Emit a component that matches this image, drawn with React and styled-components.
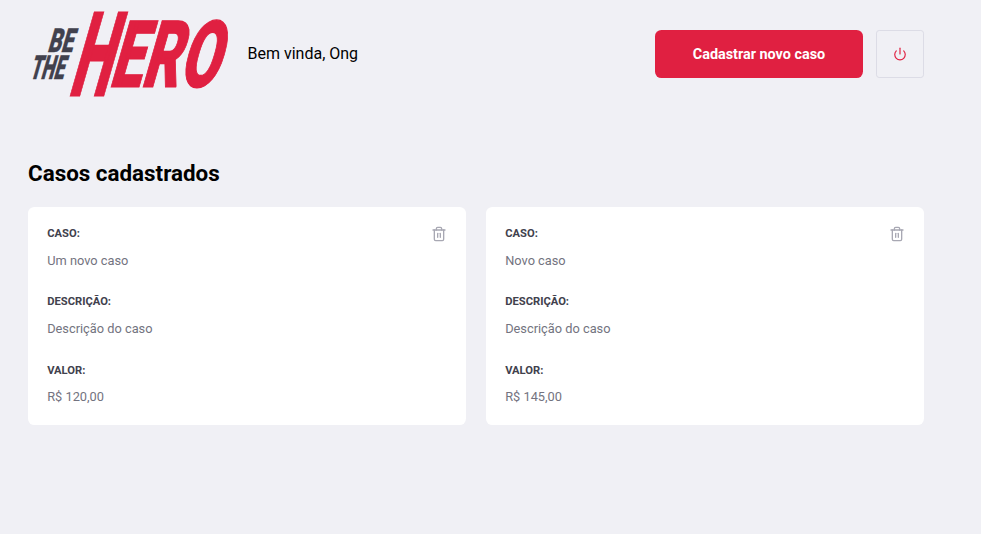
import React from 'react';
import styled, { createGlobalStyle } from 'styled-components';
import { FiPower, FiTrash2 } from 'react-icons/fi';

const GlobalStyle = createGlobalStyle`
  * {
    margin: 0;
    padding: 0;
    box-sizing: border-box;
  }

  body {
    background: #f0f0f5;
    font-family: Roboto, "Liberation Sans", sans-serif;
    -webkit-font-smoothing: antialiased;
  }
`;

const Page = styled.div`
  width: 896px;
  margin-left: 28px;
  padding-top: 12px;
`;

const Header = styled.header`
  display: flex;
  align-items: center;
  height: 84px;
`;

const LogoSvg = styled.svg`
  display: block;
  width: 200px;
  height: 84px;
  flex: none;
  overflow: visible;
`;

const Greeting = styled.span`
  margin-left: 19.5px;
  margin-bottom: 2px;
  font-size: 16px;
  color: #000;
`;

const NewCaseButton = styled.a`
  display: flex;
  align-items: center;
  justify-content: center;
  width: 208px;
  height: 48px;
  margin-left: auto;
  background: #e02041;
  border-radius: 6.4px;
  color: #fff;
  font-size: 14.4px;
  font-weight: 700;
`;

const PowerButton = styled.button`
  display: flex;
  align-items: center;
  justify-content: center;
  width: 48px;
  height: 48px;
  margin-left: 13px;
  background: transparent;
  border: 1px solid #dcdce6;
  border-radius: 3.2px;
  color: #e02041;
`;

const Title = styled.h1`
  margin-top: 64px;
  margin-bottom: 21px;
  font-size: 22.4px;
  line-height: 26px;
  font-weight: 700;
  color: #000;
`;

const CaseList = styled.ul`
  display: grid;
  grid-template-columns: repeat(2, 1fr);
  gap: 20px;
  list-style: none;
`;

const CaseCard = styled.li`
  position: relative;
  height: 218px;
  padding: 20px 19.2px 0;
  background: #fff;
  border-radius: 6.4px;
`;

const Label = styled.strong`
  display: block;
  margin-top: ${(props) => (props.$first ? 0 : '27.8px')};
  font-size: 11.2px;
  line-height: 14px;
  font-weight: 700;
  color: #41414d;
`;

const Value = styled.p`
  margin-top: 11.6px;
  font-size: 12.8px;
  line-height: 15px;
  color: #737380;
`;

const DeleteButton = styled.button`
  position: absolute;
  top: 19px;
  right: 19px;
  display: flex;
  background: transparent;
  border: 0;
  color: #a8a8b3;
`;

const cases = [
  { id: 1, title: 'Um novo caso', description: 'Descrição do caso', value: 'R$ 120,00' },
  { id: 2, title: 'Novo caso', description: 'Descrição do caso', value: 'R$ 145,00' },
];

const LogoWord = ({ x, y, length, size, color, stroke, children }) => (
  <text
    transform={`translate(${x} ${y}) skewX(-16)`}
    textLength={length}
    lengthAdjust="spacingAndGlyphs"
    fontSize={size}
    fill={color}
    stroke={color}
    strokeWidth={stroke}
  >
    {children}
  </text>
);

const Logo = () => (
  <LogoSvg viewBox="0 0 200 84" role="img" aria-label="Be The Hero">
    <g fontFamily="Roboto, sans-serif" fontWeight="900">
      <LogoWord x={19} y={40} length={25} size={33} color="#41414d" stroke={0.5}>BE</LogoWord>
      <LogoWord x={1} y={67} length={34} size={33} color="#41414d" stroke={0.5}>THE</LogoWord>
      <LogoWord x={39} y={84} length={40} size={118} color="#e02041" stroke={1.2}>H</LogoWord>
      <LogoWord x={80} y={75} length={109} size={93} color="#e02041" stroke={1.2}>ERO</LogoWord>
    </g>
  </LogoSvg>
);

export default function App() {
  return (
    <>
      <GlobalStyle />
      <Page>
        <Header>
          <Logo />
          <Greeting>Bem vinda, Ong</Greeting>
          <NewCaseButton>Cadastrar novo caso</NewCaseButton>
          <PowerButton>
            <FiPower size={14} />
          </PowerButton>
        </Header>
        <Title>Casos cadastrados</Title>
        <CaseList>
          {cases.map((item) => (
            <CaseCard key={item.id}>
              <Label $first>CASO:</Label>
              <Value>{item.title}</Value>
              <Label>DESCRIÇÃO:</Label>
              <Value>{item.description}</Value>
              <Label>VALOR:</Label>
              <Value>{item.value}</Value>
              <DeleteButton>
                <FiTrash2 size={16} />
              </DeleteButton>
            </CaseCard>
          ))}
        </CaseList>
      </Page>
    </>
  );
}
